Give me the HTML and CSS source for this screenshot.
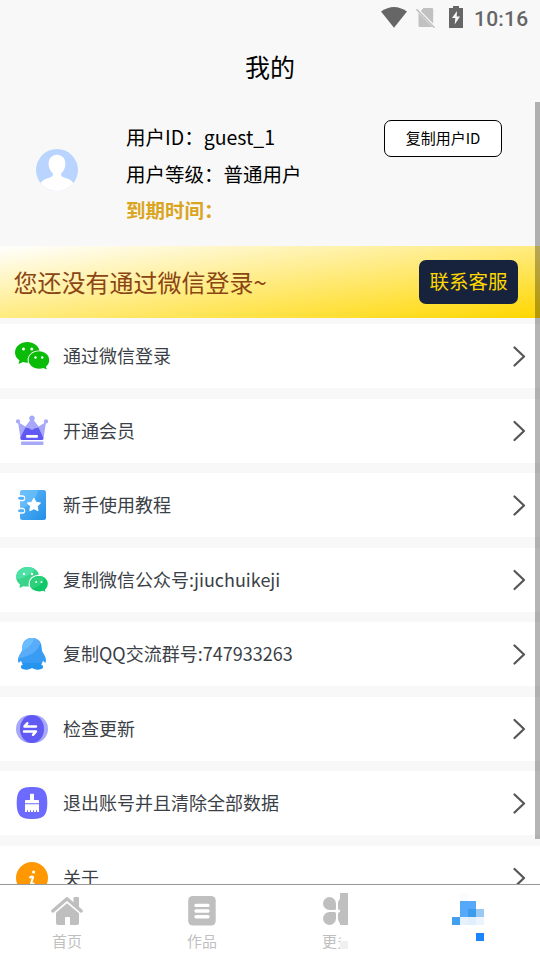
FILE: index.html
```html
<!DOCTYPE html>
<html lang="zh-CN">
<head>
<meta charset="utf-8">
<title>我的</title>
<link rel="stylesheet" href="styles.css">
</head>
<body>
<div class="app">
  <header class="status">
    <svg class="wifi" width="28" height="24" viewBox="0 0 28 24"><path d="M1 5.5Q14-3.5 27 5.5L14 21.7Z" fill="#666"/></svg>
    <svg class="sim" width="20" height="22" viewBox="0 0 20 22"><path d="M7.5 1H16Q17.2 1 17.2 2.2V16.5L4.8 4ZM2.5 6L16.3 20H4Q2.5 20 2.5 18.7Z" fill="#c1c1c1"/><path d="M.5 2.3L18.5 20.8" stroke="#c1c1c1" stroke-width="1.6"/></svg>
    <svg class="battery" width="14" height="22" viewBox="0 0 14 22"><path d="M4 0H10V2H14V22H0V2H4Z" fill="#666"/><path d="M8 5L3 12H6.3L5.7 18.5L11 10.5H7.7Z" fill="#f8f8f8"/></svg>
    <span class="clock">10:16</span>
  </header>
  <h1 class="title">我的</h1>

  <main class="content">
    <section class="profile">
      <svg class="avatar" width="42" height="42" viewBox="0 0 42 42"><defs><clipPath id="face"><circle cx="21" cy="21" r="21"/></clipPath></defs><g clip-path="url(#face)"><path d="M0 0H42V42H0Z" fill="#b8d4ff"/><path d="M21 5.8C26 5.8 29.5 9.5 29.4 15C29.3 19 27.5 22.5 25.2 24.3V26.5C25.4 29 35.8 28.5 38.5 36V42H3.5V36C6.2 28.5 16.6 29 16.8 26.5V24.3C14.5 22.5 12.7 19 12.6 15C12.5 9.5 16 5.8 21 5.8Z" fill="#fff"/></g></svg>
      <div class="facts">
        <p>用户ID：guest_1</p>
        <p>用户等级：普通用户</p>
        <p class="expiry">到期时间：</p>
      </div>
      <button class="copy">复制用户ID</button>
    </section>

    <section class="banner">
      <span>您还没有通过微信登录~</span>
      <button class="service">联系客服</button>
    </section>

    <ul class="menu">
      <li><svg class="icon" viewBox="0 0 36 36"><path d="M13.5 4C6.5 4 1 8.6 1 14.4C1 17.6 2.7 20.4 5.4 22.3L4.6 26L9 24Q11 24.7 14 24.7A11.5 9.5 0 0 1 25.5 12.5C24.3 7.6 19.4 4 13.5 4Z" fill="#0abb07"/><path d="M25 13.3C19.3 13.3 14.6 17.2 14.6 22S19.3 30.7 25 30.7Q27.3 30.7 29.3 30L32.8 31.6L32 28.5C34 26.9 35.2 24.7 35.2 22C35.2 17.2 30.7 13.3 25 13.3Z" fill="#0abb07"/><g fill="#fff"><circle cx="9.5" cy="11" r="1.5"/><circle cx="17.8" cy="11" r="1.5"/><circle cx="21.5" cy="19.5" r="1.2"/><circle cx="28.2" cy="19.5" r="1.2"/></g></svg><span>通过微信登录</span><svg class="arrow" viewBox="0 0 14 22"><path d="M2.5 2.5L12 11.5L2.5 20.5"/></svg></li>

      <li><svg class="icon" viewBox="0 0 36 36"><g fill="#a7a8fa"><circle cx="4" cy="8.4" r="2.1"/><circle cx="18" cy="5.2" r="2.7"/><circle cx="32" cy="8.4" r="2.1"/><path d="M4 9L11.5 13.5L17 6H19L24.5 13.5L32 9L29.5 25.5Q29.3 27 28 27H8Q6.7 27 6.5 25.5Z"/><rect x="7" y="28.5" width="22.5" height="3.5" rx="1"/></g><path d="M11.5 14.5Q15 14.5 18 17Q21 14.5 24.5 14.5L29.4 25Q29.5 27 28 27H8Q6.2 27 6.4 24.5Z" fill="#6159f4"/><rect x="12" y="22" width="12" height="2.8" rx="1" fill="#fff"/></svg><span>开通会员</span><svg class="arrow" viewBox="0 0 14 22"><path d="M2.5 2L12 11L2.5 20"/></svg></li>

      <li><svg class="icon" viewBox="0 0 36 36"><defs><linearGradient id="book" x2="1" y2="1"><stop stop-color="#62bafa"/><stop offset="1" stop-color="#238fe7"/></linearGradient></defs><rect x="6" y="3" width="26" height="30" rx="2.5" fill="url(#book)"/><path d="M6 22V5.5Q6 3 8.5 3H24Q22 17 6 22Z" fill="#79c7ff" opacity=".55"/><g fill="#54b0fa" stroke="#fff" stroke-width="1.4"><rect x="3.5" y="9" width="7" height="4.5" rx="2"/><rect x="3.5" y="21.5" width="7" height="4.5" rx="2"/></g><path d="M3 8H6V14H3ZM3 21H6V27H3Z" fill="#fff"/><path d="M5.3 11.3H9M5.3 23.7H9" stroke="#54b0fa" stroke-width="2.5" stroke-linecap="round"/><path d="M19.9 11.2L22 15.2L26.5 16L23.3 19.2L24 23.8L19.9 21.7L15.8 23.8L16.5 19.2L13.3 16L17.8 15.2Z" fill="#fff" stroke="#fff" stroke-linejoin="round"/></svg><span>新手使用教程</span><svg class="arrow" viewBox="0 0 14 22"><path d="M2.5 2.5L12 11.5L2.5 20.5"/></svg></li>

      <li><svg class="icon" viewBox="0 0 36 36"><defs><clipPath id="bubble"><path d="M13.5 5C7 5 2.2 9.4 2.2 15C2.2 18 3.6 20.6 6 22.4L5.4 26L9.4 24.2Q20 26 25 20V14C25 9 20 5 13.5 5Z"/></clipPath></defs><g clip-path="url(#bubble)"><path d="M0 0H36V36H0Z" fill="#39d48a"/><path d="M0 0H24Q22 14 0 18Z" fill="#4de1a5"/></g><path d="M25 13.3C19.3 13.3 15.1 17 15.1 21.9S19.3 30 25 30Q27 30 29 29.5L32.3 31L31.5 28C33.4 26.6 34.4 24.4 34.4 21.7C34.4 17 30.2 13.3 25 13.3Z" fill="#11c868" stroke="#fff" stroke-width="1.2"/><path d="M25 14C20 14 16 17.3 16 21.7Q16 24.5 17.7 26.5Q28 25 30.5 15.6Q28 14 25 14Z" fill="#2dd17b"/><g fill="#fff"><circle cx="10" cy="12" r="1.2"/><circle cx="18" cy="12" r="1.2"/><circle cx="22.2" cy="20" r="1"/><circle cx="27.5" cy="20" r="1"/></g></svg><span>复制微信公众号:jiuchuikeji</span><svg class="arrow" viewBox="0 0 14 22"><path d="M2.5 2L12 11L2.5 20"/></svg></li>

      <li><svg class="icon" viewBox="0 0 36 36"><defs><clipPath id="penguin"><path d="M18 2C12 2 8.2 6.3 8.3 12.5Q8.2 14.5 7.2 16.5C4.6 20 3.2 24 4.5 26.6Q5 27 7 24.8Q7.3 26.5 9 28.5Q6.7 29.6 7 31.3C8 34.2 15.2 34 18 31.7C20.8 34 28 34.2 29 31.3Q29.3 29.6 27 28.5Q28.7 26.5 29 24.8Q31 27 31.5 26.6C32.8 24 31.4 20 28.8 16.5Q27.8 14.5 27.7 12.5C27.8 6.3 24 2 18 2Z"/></clipPath></defs><g clip-path="url(#penguin)"><path d="M0 0H36V36H0Z" fill="#389df2"/><path d="M0 0H27Q28 20 0 23Z" fill="#58acfa"/><path d="M0 0H21Q18 14 0 17Z" fill="#6abdff"/><path d="M0 27H36V36H0Z" fill="#2695ee"/></g></svg><span>复制QQ交流群号:747933263</span><svg class="arrow" viewBox="0 0 14 22"><path d="M2.5 2.5L12 11.5L2.5 20.5"/></svg></li>

      <li><svg class="icon" viewBox="0 0 36 36"><rect x="2" y="4" width="32" height="28" rx="14" fill="#a7a8fa"/><ellipse cx="18" cy="18" rx="12" ry="14" fill="#6159f4"/><path d="M22 15.4H10.5L13.3 12.3M10 20.4H22L19 23.8" fill="none" stroke="#fff" stroke-width="2.5" stroke-linecap="round" stroke-linejoin="round"/></svg><span>检查更新</span><svg class="arrow" viewBox="0 0 14 22"><path d="M2.5 2L12 11L2.5 20"/></svg></li>

      <li><svg class="icon" viewBox="0 0 36 36"><path d="M18 2C29 2 33.3 5 33.3 18S29 34 18 34S2.7 31 2.7 18S7 2 18 2Z" fill="#6d6bff"/><path d="M16 9.5Q16 8.8 16.7 8.8H19.3Q20 8.8 20 9.5V15H24Q25 15 25 16V18.3H11V16Q11 15 12 15H16ZM11 19.3H25V27H23V25.3H22V27H20V25.3H19V27H17V25.3H16V27H14V25.3H13V27H11Z" fill="#fff"/></svg><span>退出账号并且清除全部数据</span><svg class="arrow" viewBox="0 0 14 22"><path d="M2.5 2.5L12 11.5L2.5 20.5"/></svg></li>

      <li><svg class="icon" viewBox="0 0 36 36"><circle cx="18" cy="18" r="16" fill="#ff9803"/><circle cx="19.6" cy="12" r="1.6" fill="#fff"/><path d="M15.4 17.8Q18 16 19 17L16.8 24.8Q18 25.5 20 22.8" fill="none" stroke="#fff" stroke-width="2.1"/></svg><span>关于</span><svg class="arrow" viewBox="0 0 14 22"><path d="M2.5 2L12 11L2.5 20"/></svg></li>
    </ul>
  </main>
  <div class="scrollbar"></div>

  <nav class="tabs">
    <a><svg width="34" height="34" viewBox="0 0 34 34"><path d="M2.8 18L17 5.8L31.2 18" fill="none" stroke="#bfbfbf" stroke-width="3.4" stroke-linejoin="round" stroke-linecap="round"/><path d="M23.5 5Q23.5 4 24.5 4H28Q29 4 29 5V15L23.5 10ZM17 10.3L29 20.3V30Q29 32 27 32H20V25Q20 24 19 24H16Q15 24 15 25V32H8Q6 32 6 30V19.7Z" fill="#bfbfbf"/></svg><span>首页</span></a>
    <a><svg width="34" height="34" viewBox="0 0 34 34"><rect x="3.2" y="3" width="27.5" height="29.5" rx="4.5" fill="#bfbfbf"/><path d="M11 12.4H23M11 18H23M11 23.8H23" stroke="#fff" stroke-width="3.4" stroke-linecap="round"/></svg><span>作品</span></a>
    <a class="more"><svg width="34" height="34" viewBox="0 0 34 34"><path d="M9.5 4A6.5 6.5 0 0 1 16 10.5V15.5Q16 17 14.5 17H9.5A6.5 6.5 0 0 1 9.5 4ZM9.5 19H14.5Q16 19 16 20.5V25.5A6.5 6.5 0 1 1 9.5 19ZM28 0V32H20V30.5Q18 28.5 18 25.5V21Q18 19 20 19V17Q18 17 18 15.5V10.5Q18 7 20 6V0Z" fill="#bfbfbf"/><path d="M18 17H20V19H18Z" fill="#fff"/></svg><span class="cut">更多</span><i class="patch"></i></a>
    <a><svg class="mine" width="32" height="48" viewBox="0 0 32 48" shape-rendering="crispEdges"><path d="M8 0h8v8H8z" fill="#f8fcff"/><path d="M8 8h16v16H8z" fill="#56a9f8"/><path d="M16 16h8v8h-8z" fill="#3b9bed"/><path d="M24 16h8v8h-8z" fill="#98c8f6"/><path d="M0 24h8v8H0z" fill="#43a0f0"/><path d="M8 24h8v8H8z" fill="#e5f2fe"/><path d="M16 24h8v8h-8z" fill="#e1effc"/><path d="M24 24h8v8h-8z" fill="#ecf5fe"/><path d="M24 40h8v8h-8z" fill="#1a85ff"/></svg></a>
  </nav>
</div>
</body>
</html>
```
FILE: styles.css
```css
* { box-sizing: border-box; }

body, h1, p, ul { margin: 0; padding: 0; }

body, button {
  font-family: "Noto Sans CJK SC", "Noto Sans", sans-serif;
  font-weight: 400;
}

.app {
  position: relative;
  display: flex;
  flex-direction: column;
  width: 540px;
  height: 960px;
  overflow: hidden;
  background: #f8f8f8;
  color: #000;
}

.status {
  display: flex;
  justify-content: flex-end;
  align-items: flex-start;
  height: 36px;
  padding: 6px 12px 0 0;
}
.wifi { margin-right: 8px; }
.sim { margin: 1px 13px 0 0; }
.clock {
  width: 54px;
  margin-left: 11px;
  font: 500 21px/26px Roboto, sans-serif;
  letter-spacing: 0.2px;
  color: #666;
}

.title {
  height: 66px;
  font-size: 25px;
  font-weight: 400;
  line-height: 60px;
  text-align: center;
}

.content {
  flex: 1;
  min-height: 0;
  overflow: hidden;
}

.profile {
  display: flex;
  height: 144px;
  padding: 17px 38px 0 36px;
}
.avatar { margin-top: 30px; }
.facts {
  flex: 1;
  margin-left: 48px;
  font-size: 19.5px;
  line-height: 36.4px;
  white-space: nowrap;
}
.facts p:nth-child(2) { padding-top: 1px; margin-bottom: -1px; }
.expiry { color: #daa520; font-weight: 700; }
.copy {
  width: 118px;
  height: 37px;
  margin-top: 1px;
  padding: 0 0 2px;
  border: 1px solid #000;
  border-radius: 7px;
  background: #fff;
  color: #000;
  font-size: 15px;
}

.banner {
  display: flex;
  align-items: center;
  justify-content: space-between;
  height: 72px;
  padding: 0 22px 0 13.5px;
  background: linear-gradient(to bottom right, #fff, #ffd700);
  color: #8b4513;
  font-size: 24px;
}
.banner span { padding-bottom: 2px; }
.service {
  width: 99px;
  height: 44px;
  padding: 0 0 3px;
  border: 0;
  border-radius: 7px;
  background: #17233d;
  color: #ffd700;
  font-size: 19.5px;
}

.menu {
  display: flex;
  flex-direction: column;
  gap: 10.5px;
  padding-top: 6px;
  list-style: none;
}
.menu li {
  display: flex;
  align-items: center;
  height: 64px;
  flex-shrink: 0;
  padding: 0 14px;
  background: #fff;
  color: #3b3f47;
  font-size: 18px;
}
.menu span { flex: 1; margin-left: 13px; padding-bottom: 2px; }
.icon { width: 36px; height: 36px; }
.arrow {
  width: 14px;
  height: 22px;
  fill: none;
  stroke: #555;
  stroke-width: 2.2;
  stroke-linecap: round;
  stroke-linejoin: round;
}

.scrollbar {
  position: absolute;
  top: 102px;
  right: 0;
  width: 5px;
  height: 737px;
  background: rgba(0, 0, 0, 0.29);
}

.tabs {
  display: grid;
  grid-template-columns: repeat(4, 1fr);
  height: 76px;
  border-top: 1px solid #999;
  background: #fff;
  color: #bfbfbf;
  font-size: 15px;
}
.tabs a {
  display: flex;
  flex-direction: column;
  align-items: center;
  padding: 8px 1px 0 0;
  line-height: 22px;
}
.tabs a > span { margin-top: 3px; }
.mine { margin-right: 8px; }
.more { position: relative; }
.cut { clip-path: inset(0 11px 0 0); }
.patch {
  position: absolute;
  left: 70px;
  top: 56px;
  width: 8px;
  height: 8px;
  background: #f0f0f0;
}
```
